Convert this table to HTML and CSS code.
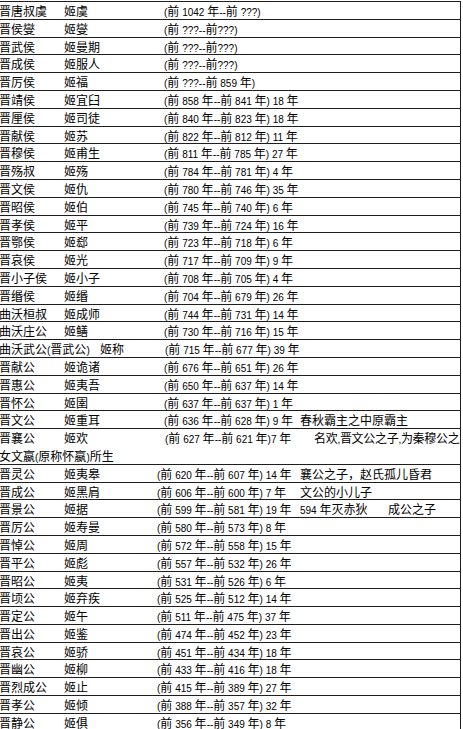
FILE: index.html
```html
<!DOCTYPE html>
<html lang="zh-CN">
<head>
<meta charset="utf-8">
<title>晋国君主列表</title>
<link rel="stylesheet" href="styles.css">
</head>
<body>
<div class="tbl">
  <div class="row"><span class="c1">晋唐叔虞</span><span class="c2">姬虞</span><span class="c3"><span class="n">(</span>前<span class="n"> 1042 </span>年<span class="n">--</span>前<span class="n"> ???)</span></span></div>
  <div class="row"><span class="c1">晋侯燮</span><span class="c2">姬燮</span><span class="c3"><span class="n">(</span>前<span class="n"> ???--</span>前<span class="n">???)</span></span></div>
  <div class="row"><span class="c1">晋武侯</span><span class="c2">姬曼期</span><span class="c3"><span class="n">(</span>前<span class="n"> ???--</span>前<span class="n">???)</span></span></div>
  <div class="row"><span class="c1">晋成侯</span><span class="c2">姬服人</span><span class="c3"><span class="n">(</span>前<span class="n"> ???--</span>前<span class="n">???)</span></span></div>
  <div class="row"><span class="c1">晋厉侯</span><span class="c2">姬福</span><span class="c3"><span class="n">(</span>前<span class="n"> ???--</span>前<span class="n"> 859 </span>年<span class="n">)</span></span></div>
  <div class="row"><span class="c1">晋靖侯</span><span class="c2">姬宜臼</span><span class="c3"><span class="n">(</span>前<span class="n"> 858 </span>年<span class="n">--</span>前<span class="n"> 841 </span>年<span class="n">) 18 </span>年</span></div>
  <div class="row"><span class="c1">晋厘侯</span><span class="c2">姬司徒</span><span class="c3"><span class="n">(</span>前<span class="n"> 840 </span>年<span class="n">--</span>前<span class="n"> 823 </span>年<span class="n">) 18 </span>年</span></div>
  <div class="row"><span class="c1">晋献侯</span><span class="c2">姬苏</span><span class="c3"><span class="n">(</span>前<span class="n"> 822 </span>年<span class="n">--</span>前<span class="n"> 812 </span>年<span class="n">) 11 </span>年</span></div>
  <div class="row"><span class="c1">晋穆侯</span><span class="c2">姬甫生</span><span class="c3"><span class="n">(</span>前<span class="n"> 811 </span>年<span class="n">--</span>前<span class="n"> 785 </span>年<span class="n">) 27 </span>年</span></div>
  <div class="row"><span class="c1">晋殇叔</span><span class="c2">姬殇</span><span class="c3"><span class="n">(</span>前<span class="n"> 784 </span>年<span class="n">--</span>前<span class="n"> 781 </span>年<span class="n">) 4 </span>年</span></div>
  <div class="row"><span class="c1">晋文侯</span><span class="c2">姬仇</span><span class="c3"><span class="n">(</span>前<span class="n"> 780 </span>年<span class="n">--</span>前<span class="n"> 746 </span>年<span class="n">) 35 </span>年</span></div>
  <div class="row"><span class="c1">晋昭侯</span><span class="c2">姬伯</span><span class="c3"><span class="n">(</span>前<span class="n"> 745 </span>年<span class="n">--</span>前<span class="n"> 740 </span>年<span class="n">) 6 </span>年</span></div>
  <div class="row"><span class="c1">晋孝侯</span><span class="c2">姬平</span><span class="c3"><span class="n">(</span>前<span class="n"> 739 </span>年<span class="n">--</span>前<span class="n"> 724 </span>年<span class="n">) 16 </span>年</span></div>
  <div class="row"><span class="c1">晋鄂侯</span><span class="c2">姬郄</span><span class="c3"><span class="n">(</span>前<span class="n"> 723 </span>年<span class="n">--</span>前<span class="n"> 718 </span>年<span class="n">) 6 </span>年</span></div>
  <div class="row"><span class="c1">晋哀侯</span><span class="c2">姬光</span><span class="c3"><span class="n">(</span>前<span class="n"> 717 </span>年<span class="n">--</span>前<span class="n"> 709 </span>年<span class="n">) 9 </span>年</span></div>
  <div class="row"><span class="c1">晋小子侯</span><span class="c2">姬小子</span><span class="c3"><span class="n">(</span>前<span class="n"> 708 </span>年<span class="n">--</span>前<span class="n"> 705 </span>年<span class="n">) 4 </span>年</span></div>
  <div class="row"><span class="c1">晋缗侯</span><span class="c2">姬缗</span><span class="c3"><span class="n">(</span>前<span class="n"> 704 </span>年<span class="n">--</span>前<span class="n"> 679 </span>年<span class="n">) 26 </span>年</span></div>
  <div class="row"><span class="c1">曲沃桓叔</span><span class="c2">姬成师</span><span class="c3"><span class="n">(</span>前<span class="n"> 744 </span>年<span class="n">--</span>前<span class="n"> 731 </span>年<span class="n">) 14 </span>年</span></div>
  <div class="row"><span class="c1">曲沃庄公</span><span class="c2">姬鳝</span><span class="c3"><span class="n">(</span>前<span class="n"> 730 </span>年<span class="n">--</span>前<span class="n"> 716 </span>年<span class="n">) 15 </span>年</span></div>
  <div class="row wide"><span class="c1">曲沃武公<span class="n">(</span>晋武公<span class="n">)</span></span><span class="c2">姬称</span><span class="c3"><span class="n">(</span>前<span class="n"> 715 </span>年<span class="n">--</span>前<span class="n"> 677 </span>年<span class="n">) 39 </span>年</span></div>
  <div class="row"><span class="c1">晋献公</span><span class="c2">姬诡诸</span><span class="c3"><span class="n">(</span>前<span class="n"> 676 </span>年<span class="n">--</span>前<span class="n"> 651 </span>年<span class="n">) 26 </span>年</span></div>
  <div class="row"><span class="c1">晋惠公</span><span class="c2">姬夷吾</span><span class="c3"><span class="n">(</span>前<span class="n"> 650 </span>年<span class="n">--</span>前<span class="n"> 637 </span>年<span class="n">) 14 </span>年</span></div>
  <div class="row"><span class="c1">晋怀公</span><span class="c2">姬圉</span><span class="c3"><span class="n">(</span>前<span class="n"> 637 </span>年<span class="n">--</span>前<span class="n"> 637 </span>年<span class="n">) 1 </span>年</span></div>
  <div class="row note"><span class="c1">晋文公</span><span class="c2">姬重耳</span><span class="c3"><span class="n">(</span>前<span class="n"> 636 </span>年<span class="n">--</span>前<span class="n"> 628 </span>年<span class="n">) 9 </span>年</span><span class="rm">春秋霸主之中原霸主</span></div>
  <div class="row tall"><span class="c1">晋襄公</span><span class="c2">姬欢</span><span class="c3"><span class="n">(</span>前<span class="n"> 627 </span>年<span class="n">--</span>前<span class="n"> 621 </span>年<span class="n">)7 </span>年</span><span class="rm">名欢<span class="n">,</span>晋文公之子<span class="n">,</span>为秦穆公之</span><span class="cont">女文嬴<span class="n">(</span>原称怀嬴<span class="n">)</span>所生</span></div>
  <div class="row late note"><span class="c1">晋灵公</span><span class="c2">姬夷皋</span><span class="c3"><span class="n">(</span>前<span class="n"> 620 </span>年<span class="n">--</span>前<span class="n"> 607 </span>年<span class="n">) 14 </span>年</span><span class="rm">襄公之子，赵氏孤儿昏君</span></div>
  <div class="row late note"><span class="c1">晋成公</span><span class="c2">姬黑肩</span><span class="c3"><span class="n">(</span>前<span class="n"> 606 </span>年<span class="n">--</span>前<span class="n"> 600 </span>年<span class="n">) 7 </span>年</span><span class="rm">文公的小儿子</span></div>
  <div class="row late note"><span class="c1">晋景公</span><span class="c2">姬据</span><span class="c3"><span class="n">(</span>前<span class="n"> 599 </span>年<span class="n">--</span>前<span class="n"> 581 </span>年<span class="n">) 19 </span>年</span><span class="rm ev"><span class="n">594 </span>年灭赤狄</span><span class="rm">成公之子</span></div>
  <div class="row late"><span class="c1">晋厉公</span><span class="c2">姬寿曼</span><span class="c3"><span class="n">(</span>前<span class="n"> 580 </span>年<span class="n">--</span>前<span class="n"> 573 </span>年<span class="n">) 8 </span>年</span></div>
  <div class="row late"><span class="c1">晋悼公</span><span class="c2">姬周</span><span class="c3"><span class="n">(</span>前<span class="n"> 572 </span>年<span class="n">--</span>前<span class="n"> 558 </span>年<span class="n">) 15 </span>年</span></div>
  <div class="row late"><span class="c1">晋平公</span><span class="c2">姬彪</span><span class="c3"><span class="n">(</span>前<span class="n"> 557 </span>年<span class="n">--</span>前<span class="n"> 532 </span>年<span class="n">) 26 </span>年</span></div>
  <div class="row late"><span class="c1">晋昭公</span><span class="c2">姬夷</span><span class="c3"><span class="n">(</span>前<span class="n"> 531 </span>年<span class="n">--</span>前<span class="n"> 526 </span>年<span class="n">) 6 </span>年</span></div>
  <div class="row late"><span class="c1">晋顷公</span><span class="c2">姬弃疾</span><span class="c3"><span class="n">(</span>前<span class="n"> 525 </span>年<span class="n">--</span>前<span class="n"> 512 </span>年<span class="n">) 14 </span>年</span></div>
  <div class="row late"><span class="c1">晋定公</span><span class="c2">姬午</span><span class="c3"><span class="n">(</span>前<span class="n"> 511 </span>年<span class="n">--</span>前<span class="n"> 475 </span>年<span class="n">) 37 </span>年</span></div>
  <div class="row late"><span class="c1">晋出公</span><span class="c2">姬鉴</span><span class="c3"><span class="n">(</span>前<span class="n"> 474 </span>年<span class="n">--</span>前<span class="n"> 452 </span>年<span class="n">) 23 </span>年</span></div>
  <div class="row late"><span class="c1">晋哀公</span><span class="c2">姬骄</span><span class="c3"><span class="n">(</span>前<span class="n"> 451 </span>年<span class="n">--</span>前<span class="n"> 434 </span>年<span class="n">) 18 </span>年</span></div>
  <div class="row late"><span class="c1">晋幽公</span><span class="c2">姬柳</span><span class="c3"><span class="n">(</span>前<span class="n"> 433 </span>年<span class="n">--</span>前<span class="n"> 416 </span>年<span class="n">) 18 </span>年</span></div>
  <div class="row late"><span class="c1">晋烈成公</span><span class="c2">姬止</span><span class="c3"><span class="n">(</span>前<span class="n"> 415 </span>年<span class="n">--</span>前<span class="n"> 389 </span>年<span class="n">) 27 </span>年</span></div>
  <div class="row late"><span class="c1">晋孝公</span><span class="c2">姬倾</span><span class="c3"><span class="n">(</span>前<span class="n"> 388 </span>年<span class="n">--</span>前<span class="n"> 357 </span>年<span class="n">) 32 </span>年</span></div>
  <div class="row late"><span class="c1">晋静公</span><span class="c2">姬俱</span><span class="c3"><span class="n">(</span>前<span class="n"> 356 </span>年<span class="n">--</span>前<span class="n"> 349 </span>年<span class="n">) 8 </span>年</span></div>
</div>
</body>
</html>
```

FILE: styles.css
```css
html, body {
  margin: 0;
  padding: 0;
  background: #ffffff;
}

.tbl {
  width: 462px;
  margin: 1px 0 0 -1px;
  border-top: 1px solid #1e1e1e;
  font-family: "Noto Sans CJK SC", "Noto Sans CJK TC", sans-serif;
  font-size: 12px;
  color: #000000;
}

.row {
  display: flex;
  align-items: flex-start;
  height: 16.8px;
  line-height: 17.8px;
  border-bottom: 1px solid #1e1e1e;
  border-right: 1px solid #1e1e1e;
  white-space: nowrap;
  overflow: hidden;
}

.c1 {
  flex: 0 0 65px;
}

.c2 {
  flex: 0 0 100px;
}

.c3 {
  flex: 0 0 auto;
}

.n {
  font-family: "Liberation Sans", Arial, sans-serif;
  font-size: 10px;
  line-height: 1;
}

.row.wide .c1 {
  flex-basis: 101px;
}

.row.wide .c2 {
  flex-basis: 65px;
}

.row.late .c2 {
  flex-basis: 93px;
}

.row.note .c3 {
  flex-basis: 136px;
}

.row.late.note .c3 {
  flex-basis: 143px;
}

.rm {
  flex: 0 0 auto;
}

.rm.ev {
  flex-basis: 88px;
}

.row.tall {
  flex-wrap: wrap;
  align-content: flex-start;
  height: 34.6px;
}

.row.tall > span {
  height: 17.8px;
}

.row.tall .c2 {
  flex-basis: 101px;
}

.row.tall .c3 {
  flex-basis: 149px;
}

.row.tall .rm {
  flex: 1 1 0;
  overflow: hidden;
  letter-spacing: -0.3px;
}

.cont {
  flex: 0 0 100%;
}
```
